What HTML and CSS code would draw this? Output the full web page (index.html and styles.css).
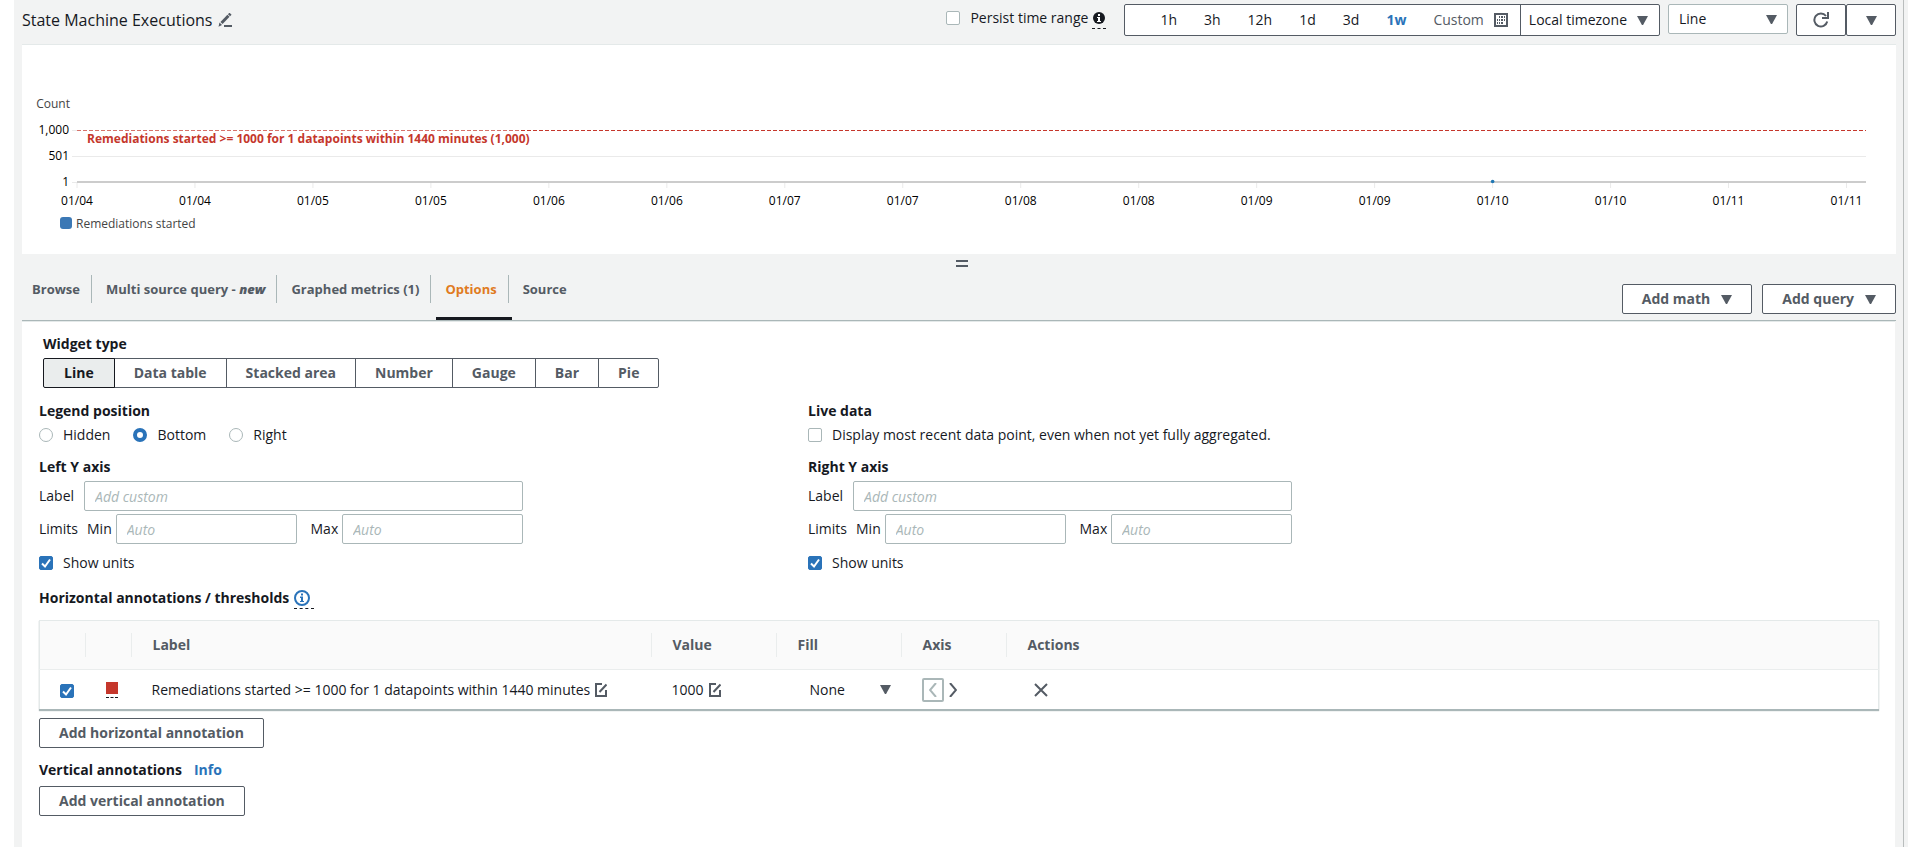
FILE: index.html
```html
<!DOCTYPE html>
<html lang="en">
<head>
<meta charset="utf-8">
<title>State Machine Executions</title>
<link rel="stylesheet" href="styles.css">
</head>
<body>
<svg class="defs" aria-hidden="true">
  <symbol id="caret" viewBox="0 0 10 8"><path d="M0 0h10L5.500 8h-1z" fill="currentColor"/></symbol>
  <symbol id="edit" viewBox="0 0 12 14"><path d="M7 1H1v12h10V7M4.500 9L11.500 1.500" fill="none" stroke="currentColor" stroke-width="2"/></symbol>
</svg>
<main class="page">
  <header class="topbar">
    <h1 class="title">State Machine Executions</h1>
    <button class="icon-btn" aria-label="Edit title">
      <svg width="14" height="14" viewBox="0 0 14 14"><path d="M3.500 10L10.500 2.800" stroke="currentColor" stroke-width="3"/><path d="M11 2.200L12.500.7" stroke="currentColor" stroke-width="3"/><path d="M1.500 9.500L4 12l-3.500 1.800z" fill="currentColor"/><path d="M6 13h8" stroke="currentColor" stroke-width="2"/></svg>
    </button>
    <div class="topbar-tools">
      <label class="check persist"><input type="checkbox"><span>Persist time range</span></label>
      <span class="hint"><svg width="12" height="12" viewBox="0 0 12 12"><circle cx="6" cy="6" r="6" fill="#16191f"/><path d="M5 2h2v2H5zM4 5h3v4h1v1H4V9h1V6H4z" fill="#fff"/></svg></span>
      <div class="range">
        <div class="range-times">
          <button>1h</button><button>3h</button><button>12h</button><button>1d</button><button>3d</button><button class="current">1w</button>
          <button class="custom">Custom <svg width="14" height="14" viewBox="0 0 14 14"><path d="M0 0h14v14H0zM2 2v10h10V2z" fill="currentColor" fill-rule="evenodd"/><path d="M5 3h1v2H5zM7 3h2v2H7zM10 3h1v2h-1zM3 6h1v2H3zM5 6h1v2H5zM7 6h2v2H7zM10 6h1v2h-1zM3 9h1v2H3zM5 9h1v2H5zM7 9h2v2H7z" fill="currentColor"/></svg></button>
        </div>
        <button class="tz">Local timezone <svg class="caret"><use href="#caret"/></svg></button>
      </div>
      <div class="select-wrap type-select">
        <select aria-label="Chart type"><option>Line</option></select>
        <svg class="caret"><use href="#caret"/></svg>
      </div>
      <div class="refresh">
        <button aria-label="Refresh"><svg width="16" height="16" viewBox="0 0 16 16"><path d="M14.200 9.500A6.500 6.500 0 1 1 13 4" fill="none" stroke="currentColor" stroke-width="2"/><path d="M15 0v6H9" fill="none" stroke="currentColor" stroke-width="2"/></svg></button>
        <button aria-label="Refresh options"><svg class="caret"><use href="#caret"/></svg></button>
      </div>
    </div>
  </header>

  <section class="chart" aria-label="Chart">
    <svg class="plot" height="190">
      <text class="unit" x="-7" y="63" text-anchor="end">Count</text>
      <g text-anchor="end"><text x="-8" y="89">1,000</text><text x="-8" y="115">501</text><text x="-8" y="141">1</text></g>
      <path d="M-5 85.500h5M-5 137.500h5" stroke="#eaeaea"/>
      <line x1="-5" x2="100%" y1="111.500" y2="111.500" stroke="#eaeaea"/>
      <g stroke="#c5372c" stroke-dasharray="4 2"><line x1="444" x2="100%" y1="85.500" y2="85.500"/><line x1="0" x2="444" y1="85.500" y2="85.500" opacity=".7"/></g>
      <g id="ticks" class="ticks"></g>
      <line x1="0" x2="100%" y1="137" y2="137" stroke="#ccc" stroke-width="2"/>
      <circle cx="79.130%" cy="136.500" r="1.800" fill="#1f77b4"/>
      <text class="threshold" x="10" y="98">Remediations started &gt;= 1000 for 1 datapoints within 1440 minutes (1,000)</text>
      <rect x="-17" y="172" width="12" height="12" rx="3" fill="#3b78b5"/>
      <text class="unit" x="-1" y="183">Remediations started</text>
    </svg>
  </section>

  <div class="grip"><span></span></div>

  <div class="tabs-bar">
    <nav class="tabs">
      <button>Browse</button><button>Multi source query - <em>new</em></button><button>Graphed metrics (1)</button><button class="active">Options</button><button>Source</button>
    </nav>
    <div class="tab-actions">
      <button class="btn">Add math <svg class="caret"><use href="#caret"/></svg></button>
      <button class="btn">Add query <svg class="caret"><use href="#caret"/></svg></button>
    </div>
  </div>

  <section class="panel">
    <div class="widget-type">
      <h2>Widget type</h2>
      <div class="segments">
        <button class="on">Line</button><button>Data table</button><button>Stacked area</button><button>Number</button><button>Gauge</button><button>Bar</button><button>Pie</button>
      </div>
    </div>

    <div class="columns">
      <div>
        <h2>Legend position</h2>
        <div class="radios">
          <label class="check"><input type="radio" name="legend"><span>Hidden</span></label>
          <label class="check"><input type="radio" name="legend" checked><span>Bottom</span></label>
          <label class="check"><input type="radio" name="legend"><span>Right</span></label>
        </div>
        <h2>Left Y axis</h2>
        <div class="field"><label for="l-label">Label</label><input id="l-label" type="text" placeholder="Add custom"></div>
        <div class="field limits"><span>Limits</span><label for="l-min">Min</label><input id="l-min" type="text" placeholder="Auto"><label class="max" for="l-max">Max</label><input id="l-max" type="text" placeholder="Auto"></div>
        <label class="check units"><input type="checkbox" checked><span>Show units</span></label>
      </div>
      <div>
        <h2>Live data</h2>
        <div class="radios">
          <label class="check"><input type="checkbox"><span>Display most recent data point, even when not yet fully aggregated.</span></label>
        </div>
        <h2>Right Y axis</h2>
        <div class="field"><label for="r-label">Label</label><input id="r-label" type="text" placeholder="Add custom"></div>
        <div class="field limits"><span>Limits</span><label for="r-min">Min</label><input id="r-min" type="text" placeholder="Auto"><label class="max" for="r-max">Max</label><input id="r-max" type="text" placeholder="Auto"></div>
        <label class="check units"><input type="checkbox" checked><span>Show units</span></label>
      </div>
    </div>

    <div class="heading-row">
      <h2>Horizontal annotations / thresholds</h2>
      <span class="hint wide"><svg width="16" height="16" viewBox="0 0 16 16"><circle cx="8" cy="8" r="7" fill="none" stroke="#2a73b9" stroke-width="2"/><path d="M7 3.500h2v2H7zM6 6.500h3V11h1v1H6v-1h1V8H6z" fill="#2a73b9"/></svg></span>
    </div>
    <table class="annotations">
      <colgroup><col class="c-check"><col class="c-color"><col class="c-label"><col class="c-value"><col class="c-fill"><col class="c-axis"><col></colgroup>
      <thead><tr><th><span></span></th><th><span></span></th><th><span>Label</span></th><th><span>Value</span></th><th><span>Fill</span></th><th><span>Axis</span></th><th><span>Actions</span></th></tr></thead>
      <tbody><tr>
        <td><label class="check row-check"><input type="checkbox" checked aria-label="Show annotation"></label></td>
        <td><button class="swatch" aria-label="Color"><i></i></button></td>
        <td><div class="editable">Remediations started &gt;= 1000 for 1 datapoints within 1440 minutes <button class="icon-btn" aria-label="Edit label"><svg width="12" height="14"><use href="#edit"/></svg></button></div></td>
        <td><div class="editable">1000 <button class="icon-btn" aria-label="Edit value"><svg width="12" height="14"><use href="#edit"/></svg></button></div></td>
        <td><div class="select-wrap fill-select"><select aria-label="Fill"><option>None</option></select><svg class="caret"><use href="#caret"/></svg></div></td>
        <td><div class="axis">
          <button class="left" aria-label="Left axis" disabled><svg width="8" height="14" viewBox="0 0 8 14"><path d="M7 0L1 7l6 7" fill="none" stroke="currentColor" stroke-width="2"/></svg></button>
          <button aria-label="Right axis"><svg width="8" height="14" viewBox="0 0 8 14"><path d="M1 0l6 7-6 7" fill="none" stroke="currentColor" stroke-width="2"/></svg></button>
        </div></td>
        <td><button class="icon-btn remove" aria-label="Remove"><svg width="14" height="14" viewBox="0 0 14 14"><path d="M1 1l12 12M13 1L1 13" stroke="currentColor" stroke-width="2"/></svg></button></td>
      </tr></tbody>
    </table>
    <button class="btn">Add horizontal annotation</button>
    <div class="heading-row vertical"><h2>Vertical annotations</h2><a href="#">Info</a></div>
    <button class="btn">Add vertical annotation</button>
  </section>
</main>
<script src="chart.js"></script>
</body>
</html>
```
FILE: styles.css
```css
* { box-sizing: border-box; }
html { background: #f2f3f3; }
body {
  margin: 0;
  background: linear-gradient(90deg, #fff 14px, #f2f3f3 14px);
  color: #16191f;
  font: 14px/20px "Open Sans", "Noto Sans", sans-serif;
}
button, input, select { font: inherit; color: inherit; margin: 0; }
button { border: 0; background: none; padding: 0; white-space: nowrap; }
h1, h2 { margin: 0; }
h2 { font-size: 14px; line-height: 20px; font-weight: 700; }
svg { display: block; flex: none; }
.defs { position: absolute; width: 0; height: 0; }
.caret { width: 11px; height: 9px; color: #545b64; }
.icon-btn { color: #545b64; }

.page {
  min-height: 100vh;
  margin: 0 4px 0 14px;
  padding: 0 7px 0 8px;
  background: #f2f3f3;
  border-right: 1px solid #b9bdbd;
  display: flex;
  flex-direction: column;
}

.topbar { display: flex; align-items: center; height: 44px; padding-bottom: 4px; gap: 5px; }
.title { font-size: 16px; line-height: 20px; font-weight: 400; }
.topbar-tools { display: flex; align-items: center; margin-left: auto; }
.check { display: flex; align-items: center; gap: 10px; }
.check input {
  appearance: none;
  flex: none;
  width: 14px;
  height: 14px;
  border: 1px solid #aab7b8;
  border-radius: 2px;
  background: #fff;
}
.check input[type="radio"] { border-radius: 50%; }
.check input[type="radio"]:checked { border: 4px solid #2a73b9; }
.check input[type="checkbox"]:checked {
  border-color: #2a73b9;
  background: #2a73b9 url("data:image/svg+xml,%3Csvg xmlns='http://www.w3.org/2000/svg' viewBox='0 0 12 12'%3E%3Cpath d='M2 6.500L5 9.500 10 2.500' fill='none' stroke='white' stroke-width='2'/%3E%3C/svg%3E") center / 12px 12px no-repeat;
}
.persist { padding-bottom: 4px; }
.hint { border-bottom: 1px dashed #16191f; padding: 0 1px 4px; margin: 0 18px 0 4px; }
.hint.wide { margin: 3px 0 0 5px; padding: 0 4px 2px 0; }

.range { display: flex; height: 32px; background: #fff; border: 1px solid #545b64; border-radius: 2px; }
.range-times { display: flex; gap: 27px; padding: 0 12px 0 35px; border-right: 1px solid #545b64; }
.range-times .current { color: #2a73b9; font-weight: 700; }
.range-times .custom { display: flex; align-items: center; gap: 10px; color: #545b64; }
.tz { display: flex; align-items: center; gap: 10px; padding: 0 11px 0 8px; }

.select-wrap { display: grid; align-items: center; }
.select-wrap > * { grid-area: 1 / 1; }
.select-wrap select { appearance: none; width: 100%; background: transparent; border: 0; padding: 0; }
.select-wrap .caret { justify-self: end; pointer-events: none; }
.type-select { width: 120px; height: 30px; margin: 0 8px 2px; padding: 0 10px; background: #fff; border: 1px solid #aab7b8; border-radius: 2px; }
.refresh { display: flex; }
.refresh button {
  display: grid;
  place-items: center;
  width: 50px;
  height: 32px;
  color: #545b64;
  background: #fff;
  border: 1px solid #545b64;
  border-radius: 2px;
}

.chart { height: 210px; padding: 0 30px 0 55px; background: #fff; border-top: 1px solid #e4e9e9; }
.plot { width: 100%; overflow: visible; font-size: 12px; }
.plot .unit { fill: #444; }
.plot .threshold { fill: #c5372c; font-weight: 700; }
.ticks line { stroke: #eaeaea; }

.grip { display: grid; place-items: center; height: 18px; padding: 0 0 0 6px; }
.grip span { width: 12px; height: 7px; border: solid #545b64; border-width: 2px 0; }

.tabs-bar { display: flex; justify-content: space-between; height: 49px; border-bottom: 1px solid #aab7b8; }
.tabs { display: flex; align-items: flex-start; padding-top: 3px; }
.tabs button { position: relative; height: 28px; padding: 0 11px 0 10px; font-size: 13px; font-weight: 700; color: #545b64; }
.tabs button + button { padding-left: 14px; border-left: 1px solid #aab7b8; }
.tabs em { font-weight: 800; }
.tabs .active { color: #e07b1f; }
.tabs .active::after { content: ""; position: absolute; left: 5px; right: -4px; top: 42px; height: 3px; background: #16191f; }
.tab-actions { display: flex; align-items: flex-end; gap: 10px; padding-bottom: 6px; }
.btn {
  display: flex;
  align-items: center;
  gap: 11px;
  height: 30px;
  padding: 0 19px;
  font-weight: 700;
  color: #545b64;
  background: #fff;
  border: 1px solid #545b64;
  border-radius: 2px;
}

.panel { flex: 1; margin-right: 1px; padding: 12px 16px 0 17px; background: #fff; border-top: 1px solid #e4e9e9; }
.widget-type { padding-left: 4px; }
.segments { display: flex; margin-top: 4px; }
.segments button { height: 30px; padding: 0 19px; font-weight: 700; color: #545b64; background: #fff; border: 1px solid #545b64; margin-right: -1px; }
.segments .on { position: relative; color: #16191f; background: #eaeded; border-color: #16191f; }
.segments button:first-child { border-radius: 2px 0 0 2px; padding: 0 20px; }
.segments button:last-child { border-radius: 0 2px 2px 0; }

.columns { display: grid; grid-template-columns: 769fr 1071fr; margin-top: 13px; }
.radios { display: flex; gap: 23px; margin: 4px 0 12px; }
.field { display: flex; align-items: center; width: 484px; gap: 10px; }
.field + .field { margin-top: 3px; }
.field input { flex: 1; min-width: 0; height: 30px; padding: 0 10px; border: 1px solid #aab7b8; border-radius: 2px; background: #fff; }
.field input::placeholder { color: #aab7b8; font-style: italic; }
.limits { gap: 4px; }
.limits span { margin-right: 5px; }
.limits .max { margin-left: 10px; }
.columns h2 + .field { margin-top: 4px; }
.units { margin-top: 9px; }

.heading-row { display: flex; align-items: center; margin: 14px 0 11px; }
.annotations {
  width: 100%;
  table-layout: fixed;
  border-collapse: collapse;
  margin-bottom: 8px;
  border: 1px solid #e4e9e9;
  border-bottom-color: #aab7b8;
  box-shadow: 0 1px 1px #aab7b8;
}
.c-check { width: 46px; }
.c-color { width: 46px; }
.c-label { width: 520px; }
.c-value, .c-fill { width: 125px; }
.c-axis { width: 105px; }
.annotations th { height: 49px; padding: 0; background: #fafafa; border-bottom: 1px solid #eaeded; text-align: left; color: #545b64; }
.annotations th span { display: block; height: 24px; line-height: 24px; padding-left: 21px; border-right: 1px solid #eaeded; }
.annotations th:last-child span { border-right: 0; }
.annotations td { height: 40px; padding: 0 0 0 20px; }
.row-check { padding-top: 3px; }
.swatch { display: block; padding-bottom: 3px; border-bottom: 1px dashed #16191f; }
.swatch i { display: block; width: 12px; height: 12px; background: #c5372c; }
.editable { display: flex; align-items: center; gap: 5px; white-space: nowrap; }
.fill-select { width: 94px; padding-left: 13px; }
.axis { display: flex; align-items: center; gap: 5px; color: #545b64; }
.axis .left { padding: 3px 5px; border: 2px solid #aab7b8; border-radius: 2px; color: #aab7b8; }
.remove { margin-left: 7px; display: block; }
.vertical { margin: 12px 0 6px; gap: 12px; }
.vertical a { color: #2a73b9; font-weight: 700; text-decoration: none; }
```
FILE: chart.js
```js
const ns = "http://www.w3.org/2000/svg";
const labels = ["01/04", "01/04", "01/05", "01/05", "01/06", "01/06", "01/07", "01/07",
  "01/08", "01/08", "01/09", "01/09", "01/10", "01/10", "01/11", "01/11"];
const group = document.getElementById("ticks");
labels.forEach((label, i) => {
  const x = (i * 6.594) + "%";
  const line = document.createElementNS(ns, "line");
  line.setAttribute("x1", x);
  line.setAttribute("x2", x);
  line.setAttribute("y1", 138);
  line.setAttribute("y2", 143);
  const text = document.createElementNS(ns, "text");
  text.setAttribute("x", x);
  text.setAttribute("y", 160);
  text.setAttribute("text-anchor", "middle");
  text.textContent = label;
  group.append(line, text);
});
```
